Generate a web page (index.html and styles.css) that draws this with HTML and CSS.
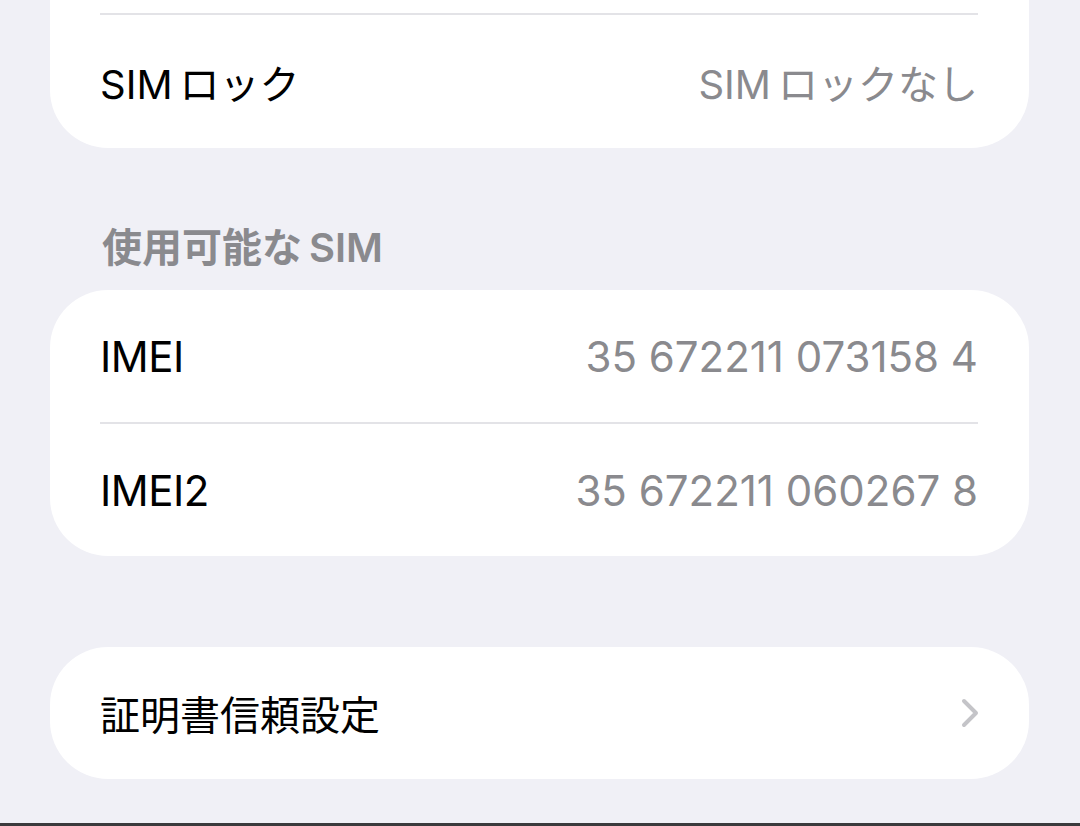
FILE: index.html
```html
<!DOCTYPE html>
<html lang="ja">
<head>
    <meta charset="UTF-8">
    <meta name="viewport" content="width=device-width, initial-scale=1.0">
    <title>情報</title>
    <link rel="stylesheet" href="styles.css">
</head>
<body>

<div class="page">
    <!-- Carrier group, continued from above -->
    <div class="card card-continued">
        <div class="row">
            <span class="label label-ja">SIM<span class="gap"></span>ロック</span>
            <span class="value value-ja">SIM<span class="gap"></span>ロックなし</span>
        </div>
    </div>

    <h2 class="section-title">使用可能な<span class="gap"></span>SIM</h2>
    <div class="card">
        <div class="row">
            <span class="label">IMEI</span>
            <span class="value">35 672211 073158 4</span>
        </div>
        <div class="row">
            <span class="label">IMEI2</span>
            <span class="value">35 672211 060267 8</span>
        </div>
    </div>

    <div class="card card-last">
        <a class="row row-link" href="#">
            <span class="label label-ja">証明書信頼設定</span>
            <svg class="chevron" width="18" height="30" viewBox="0 0 18 30">
                <path d="M3 3 L15 15 L3 27" fill="none" stroke="#c4c4c8" stroke-width="4" stroke-linecap="round" stroke-linejoin="round"/>
            </svg>
        </a>
    </div>
</div>

<div class="home-edge"></div>

</body>
</html>
```

FILE: styles.css
```css
/* General Reset */
* {
    margin: 0;
    padding: 0;
    box-sizing: border-box;
}
body {
    font-family: 'Inter', 'Noto Sans CJK JP', sans-serif;
    background-color: #F0F0F6; /* grouped background */
    color: #000;
    height: 826px;
    overflow: hidden;
    display: flex;
    flex-direction: column;
}

.page {
    padding: 0 51px 0 50px;
    flex-grow: 1;
}

/* Cards */
.card {
    background-color: #fff;
    border-radius: 58px;
    padding: 0 51px 0 50px;
}
.card-continued {
    border-top-left-radius: 0;
    border-top-right-radius: 0;
    padding-top: 13px;
}
.card-continued .row {
    border-top: 2px solid #E3E3E7;
    height: 135px;
}
.card-last {
    margin-top: 91px;
}

.row {
    height: 132px;
    display: flex;
    justify-content: space-between;
    align-items: center;
    text-decoration: none;
    color: inherit;
}
.row + .row {
    border-top: 2px solid #E3E3E7;
    height: 134px;
}

.label {
    font-size: 42px;
    letter-spacing: -0.5px;
    color: #000;
}
.value {
    font-size: 42px;
    color: #8A8A8E;
}
.label-ja,
.value-ja {
    font-size: 40px;
    letter-spacing: 0;
}

/* space between latin and kana */
.gap {
    display: inline-block;
    width: 7px;
}

.chevron {
    margin-right: -1px;
}

/* Section header */
.section-title {
    font-size: 40px;
    font-weight: 600;
    color: #8A8A8E;
    line-height: 48px;
    margin: 76px 0 18px 52px;
}

.home-edge {
    height: 3px;
    background-color: #3A3A3C;
}
```
